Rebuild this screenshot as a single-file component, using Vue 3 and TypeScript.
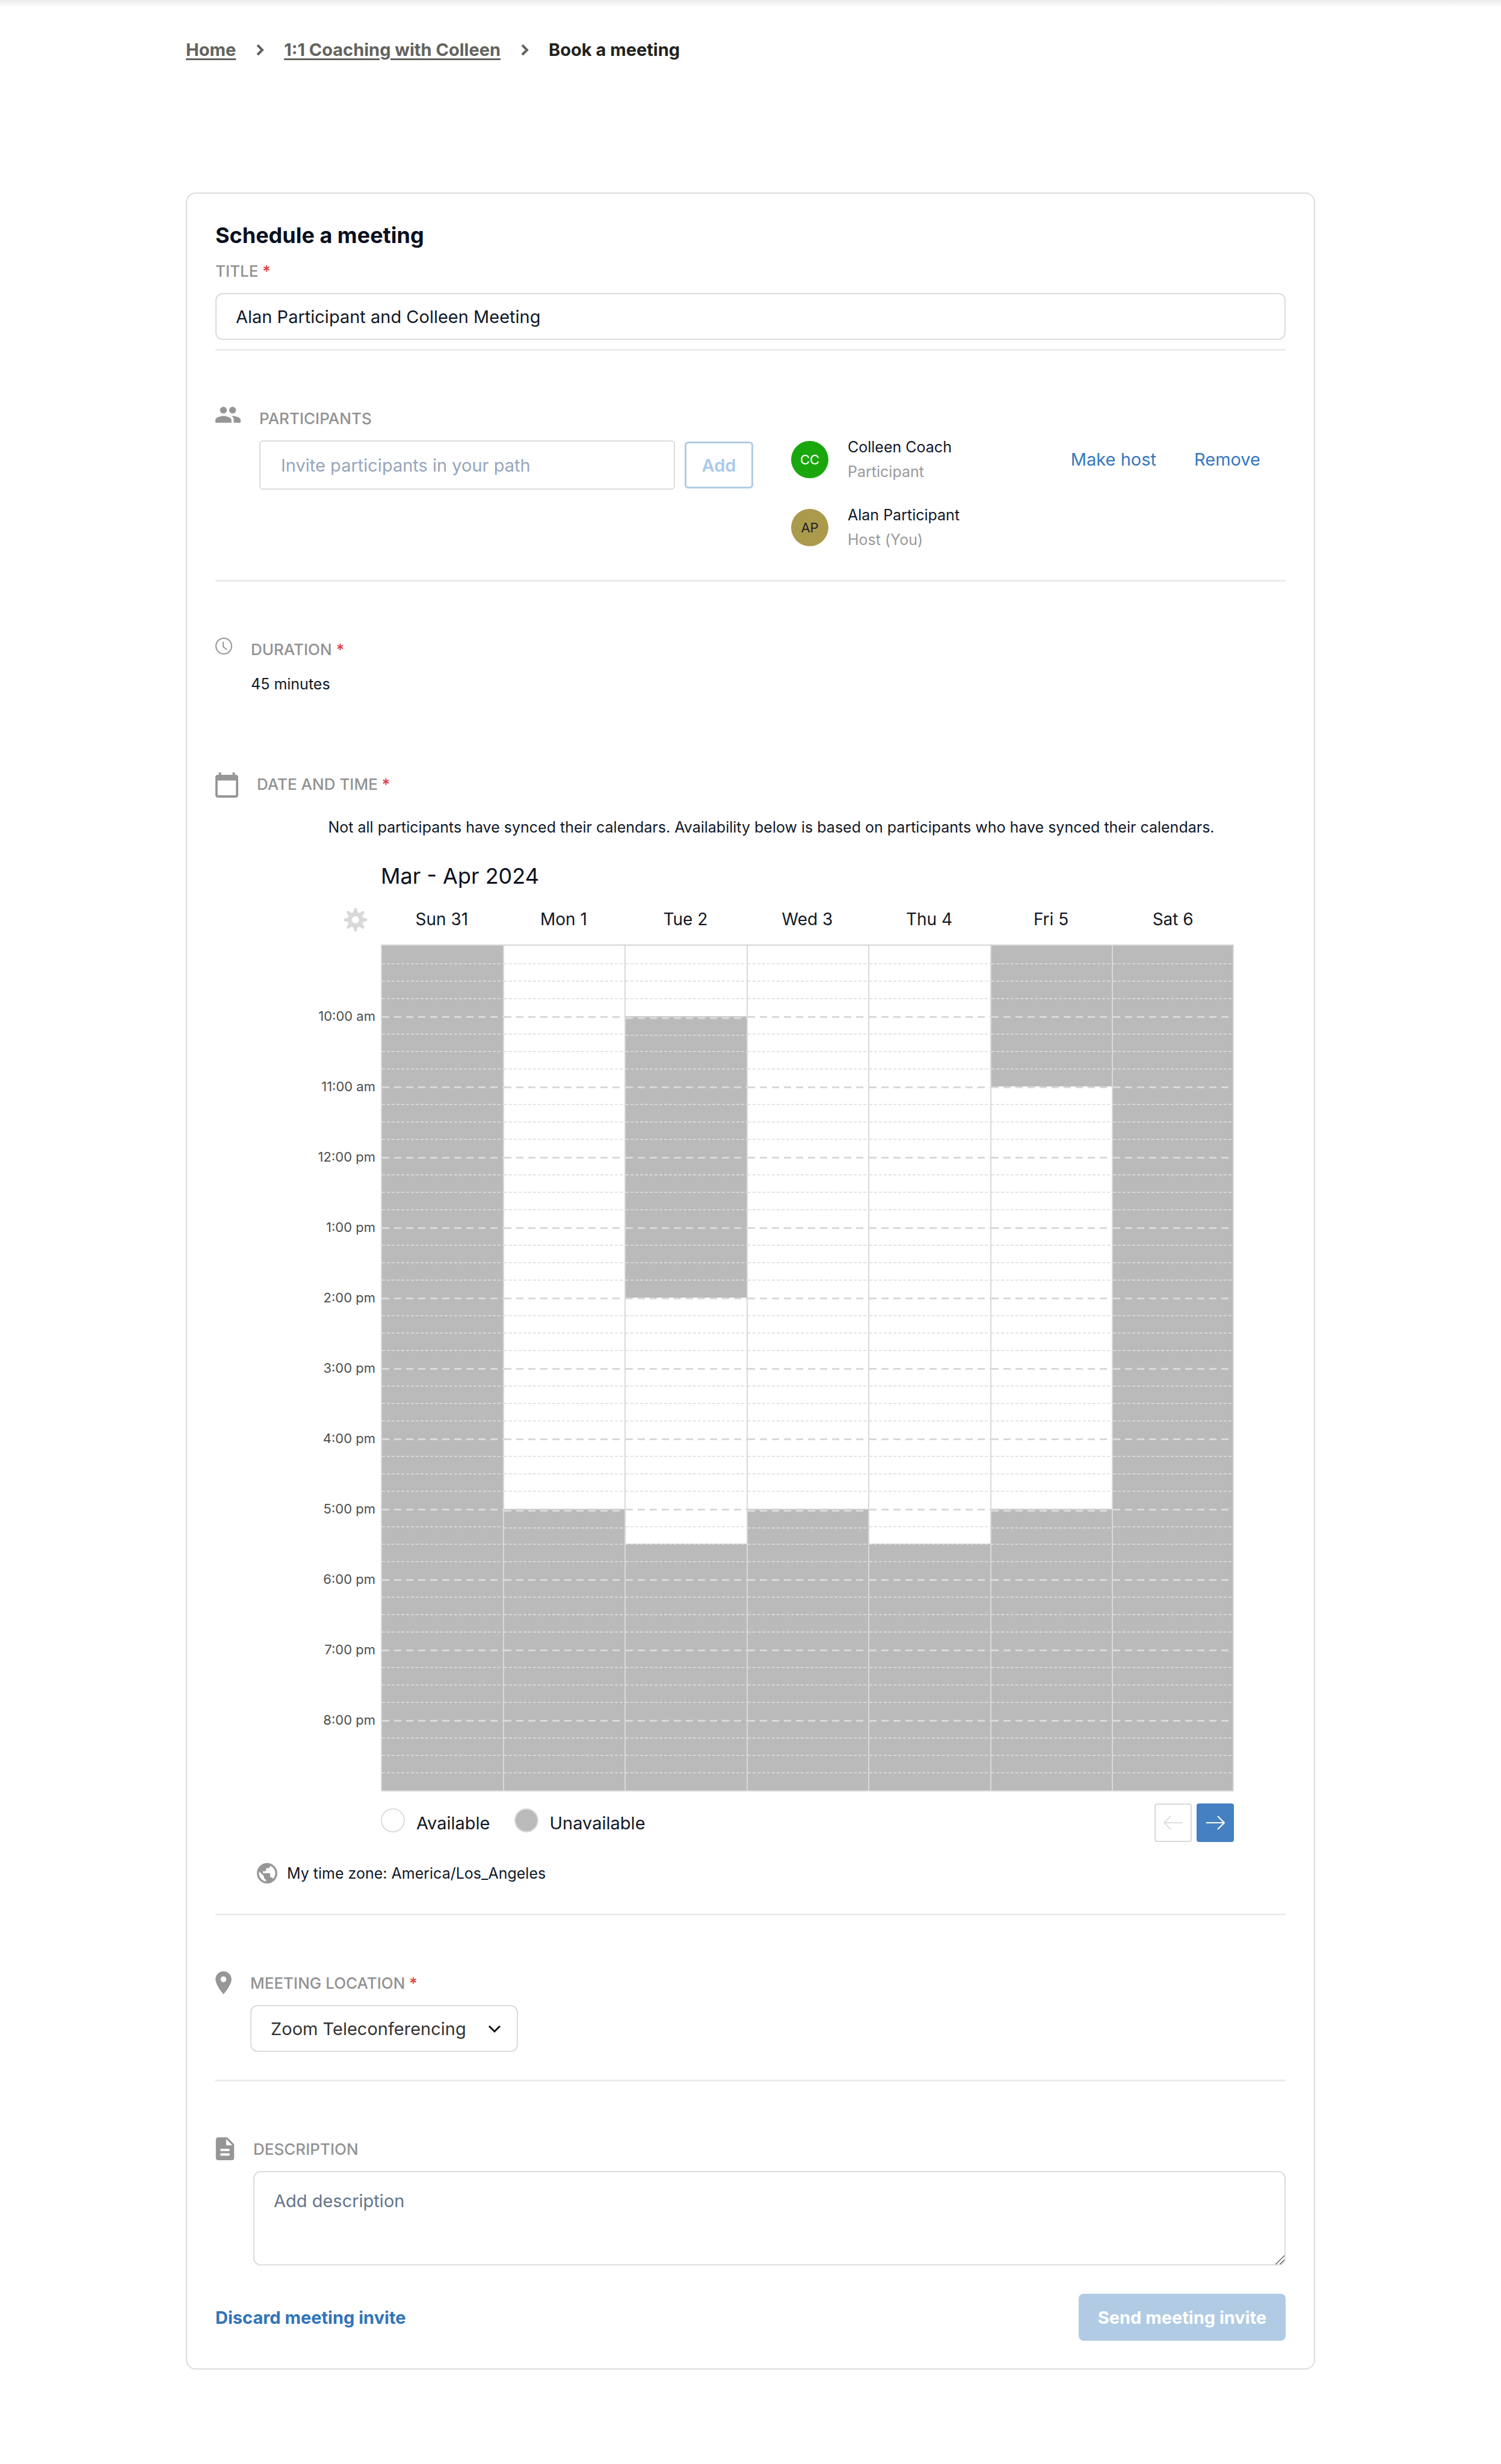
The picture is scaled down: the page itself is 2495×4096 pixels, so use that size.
<script setup lang="ts">
import { ref } from 'vue'

interface Attendee {
  initials: string
  name: string
  role: string
  tone: 'green' | 'olive'
  removable: boolean
}

interface Day {
  label: string
  // Unavailable spans as [start, end) half-hour slots counted from 9:00 am
  busy: [number, number][]
}

const title = ref('Alan Participant and Colleen Meeting')
const invitee = ref('')
const description = ref('')
const location = ref('Zoom Teleconferencing')

const attendees: Attendee[] = [
  { initials: 'CC', name: 'Colleen Coach', role: 'Participant', tone: 'green', removable: true },
  { initials: 'AP', name: 'Alan Participant', role: 'Host (You)', tone: 'olive', removable: false },
]

const days: Day[] = [
  { label: 'Sun 31', busy: [[0, 24]] },
  { label: 'Mon 1', busy: [[16, 24]] },
  { label: 'Tue 2', busy: [[2, 10], [17, 24]] },
  { label: 'Wed 3', busy: [[16, 24]] },
  { label: 'Thu 4', busy: [[17, 24]] },
  { label: 'Fri 5', busy: [[0, 4], [16, 24]] },
  { label: 'Sat 6', busy: [[0, 24]] },
]

const hours = [
  '10:00 am', '11:00 am', '12:00 pm', '1:00 pm', '2:00 pm', '3:00 pm',
  '4:00 pm', '5:00 pm', '6:00 pm', '7:00 pm', '8:00 pm',
]

const slots = Array.from({ length: 24 }, (_, i) => i)

const isBusy = (day: Day, slot: number) => day.busy.some(([from, to]) => slot >= from && slot < to)
const startsBusy = (day: Day, slot: number) => slot > 0 && day.busy.some(([from]) => from === slot)
</script>

<template>
  <div class="page">
    <div class="top-shadow"></div>
    <main class="content">
      <nav class="crumbs" aria-label="Breadcrumb">
        <a href="#home">Home</a>
        <svg class="crumb-sep" viewBox="0 0 14 20" aria-hidden="true"><path d="M3 2l8 8-8 8" /></svg>
        <a href="#coaching">1:1 Coaching with Colleen</a>
        <svg class="crumb-sep" viewBox="0 0 14 20" aria-hidden="true"><path d="M3 2l8 8-8 8" /></svg>
        <span class="crumb-current">Book a meeting</span>
      </nav>

      <form class="card" @submit.prevent>
        <div class="title-block">
          <h1>Schedule a meeting</h1>
          <label class="label" for="title">TITLE <span class="req">*</span></label>
          <input id="title" v-model="title" class="field title-field" type="text" />
        </div>

        <section class="section ruled">
          <svg class="icon people" viewBox="1 5 22 14" aria-hidden="true"><path d="M16 11c1.66 0 2.99-1.34 2.99-3S17.66 5 16 5c-1.66 0-3 1.34-3 3s1.34 3 3 3zm-8 0c1.66 0 2.99-1.34 2.99-3S9.66 5 8 5C6.34 5 5 6.34 5 8s1.34 3 3 3zm0 2c-2.33 0-7 1.17-7 3.5V19h14v-2.5c0-2.33-4.67-3.5-7-3.5zm8 0c-.29 0-.62.02-.97.05 1.16.84 1.97 1.97 1.97 3.45V19h6v-2.5c0-2.33-4.67-3.5-7-3.5z" /></svg>
          <div class="body split">
            <div class="invite">
              <label class="label" for="invitee">PARTICIPANTS</label>
              <div class="invite-row">
                <input id="invitee" v-model="invitee" class="field invite-field" type="text" placeholder="Invite participants in your path" />
                <button class="add" type="button" disabled>Add</button>
              </div>
            </div>
            <ul class="attendees">
              <li v-for="a in attendees" :key="a.initials" class="attendee">
                <span class="avatar" :class="a.tone">{{ a.initials }}</span>
                <div class="who">
                  <div class="name">{{ a.name }}</div>
                  <div class="role">{{ a.role }}</div>
                </div>
                <div v-if="a.removable" class="actions">
                  <button class="link" type="button">Make host</button>
                  <button class="link" type="button">Remove</button>
                </div>
              </li>
            </ul>
          </div>
        </section>

        <section class="section duration">
          <svg class="icon clock" viewBox="0 0 28 28" aria-hidden="true"><circle cx="14" cy="14" r="13" /><path d="M13 7v8l6 5" /></svg>
          <div class="body">
            <div class="label">DURATION <span class="req">*</span></div>
            <p class="value">45 minutes</p>
          </div>
        </section>

        <section class="section ruled">
          <svg class="icon date" viewBox="2 1 20 22" aria-hidden="true"><path d="M20 3h-1V1h-2v2H7V1H5v2H4c-1.1 0-2 .9-2 2v16c0 1.1.9 2 2 2h16c1.1 0 2-.9 2-2V5c0-1.1-.9-2-2-2zm0 18H4V8h16v13z" /></svg>
          <div class="body when">
            <div class="label">DATE AND TIME <span class="req">*</span></div>
            <p class="notice">Not all participants have synced their calendars. Availability below is based on participants who have synced their calendars.</p>

            <div class="calendar">
              <h2>Mar - Apr 2024</h2>
              <table>
                <thead>
                  <tr>
                    <td class="gear-cell">
                      <button class="gear" type="button" aria-label="Calendar settings">
                        <svg viewBox="-20 -20 40 40" aria-hidden="true">
                          <circle r="9.5" />
                          <path v-for="n in 8" :key="n" :transform="`rotate(${n * 45})`" d="M-7-10C-3-12-3-14-2.6-18Q0-21.5 2.6-18C3-14 3-12 7-10Z" />
                        </svg>
                      </button>
                    </td>
                    <th v-for="d in days" :key="d.label" scope="col">{{ d.label }}</th>
                  </tr>
                </thead>
                <tbody>
                  <tr v-for="s in slots" :key="s">
                    <td v-if="s === 0 || s === 23" class="blank"></td>
                    <th v-else-if="s % 2 === 1" scope="row" rowspan="2">{{ hours[(s - 1) / 2] }}</th>
                    <td
                      v-for="d in days"
                      :key="d.label"
                      class="slot"
                      :class="{ hour: s % 2 === 0, first: s === 0, busy: isBusy(d, s), edge: startsBusy(d, s) }"
                    ></td>
                  </tr>
                </tbody>
              </table>
              <div class="legend-row">
                <div class="legend">
                  <span class="dot"></span><span class="legend-text">Available</span>
                  <span class="dot filled"></span><span class="legend-text">Unavailable</span>
                </div>
                <div class="pager">
                  <button class="page-btn prev" type="button" aria-label="Previous week" disabled>
                    <svg viewBox="0 0 32 24" aria-hidden="true"><path d="M31 12H2M12 1L1 12l11 11" /></svg>
                  </button>
                  <button class="page-btn next" type="button" aria-label="Next week">
                    <svg viewBox="0 0 32 24" aria-hidden="true"><path d="M1 12h29M20 1l11 11-11 11" /></svg>
                  </button>
                </div>
              </div>
            </div>

            <div class="zone">
              <svg viewBox="2 2 20 20" aria-hidden="true"><path d="M12 2C6.48 2 2 6.48 2 12s4.48 10 10 10 10-4.48 10-10S17.52 2 12 2zm-1 17.93c-3.95-.49-7-3.85-7-7.93 0-.62.08-1.21.21-1.79L9 15v1c0 1.1.9 2 2 2v1.93zm6.9-2.54c-.26-.81-1-1.39-1.9-1.39h-1v-3c0-.55-.45-1-1-1H8v-2h2c.55 0 1-.45 1-1V7h2c1.1 0 2-.9 2-2v-.41c2.93 1.19 5 4.06 5 7.41 0 2.08-.8 3.97-2.1 5.39z" /></svg>
              <span>My time zone: America/Los_Angeles</span>
            </div>
          </div>
        </section>

        <section class="section ruled">
          <svg class="icon place" viewBox="5 2 14 20" aria-hidden="true"><path d="M12 2C8.13 2 5 5.13 5 9c0 5.25 7 13 7 13s7-7.75 7-13c0-3.87-3.13-7-7-7zm0 9.5c-1.38 0-2.5-1.12-2.5-2.5s1.12-2.5 2.5-2.5 2.5 1.12 2.5 2.5-1.12 2.5-2.5 2.5z" /></svg>
          <div class="body">
            <label class="label" for="location">MEETING LOCATION <span class="req">*</span></label>
            <div class="select-wrap">
              <select id="location" v-model="location" class="field">
                <option>Zoom Teleconferencing</option>
              </select>
              <svg class="caret" viewBox="0 0 22 14" aria-hidden="true"><path d="M2 2l9 9 9-9" /></svg>
            </div>
          </div>
        </section>

        <section class="section">
          <svg class="icon doc" viewBox="4 2 16 20" aria-hidden="true"><path d="M14 2H6c-1.1 0-1.99.9-1.99 2L4 20c0 1.1.89 2 1.99 2H18c1.1 0 2-.9 2-2V8l-6-6zm2 16H8v-2h8v2zm0-4H8v-2h8v2zm-3-5V3.5L18.5 9H13z" /></svg>
          <div class="body">
            <label class="label" for="description">DESCRIPTION</label>
            <textarea id="description" v-model="description" class="field" placeholder="Add description"></textarea>
          </div>
        </section>

        <footer class="footer">
          <button class="discard" type="button">Discard meeting invite</button>
          <button class="send" type="submit" disabled>Send meeting invite</button>
        </footer>
      </form>
    </main>
  </div>
</template>

<style>
body {
  margin: 0;
  background: #fff;
}
</style>

<style scoped>
.page,
.page * {
  box-sizing: border-box;
}

.page {
  font-family: Inter, 'Liberation Sans', sans-serif;
  font-size: 29px;
  line-height: 32px;
  color: #111827;
  padding-bottom: 48px;
}

.page button,
.page input,
.page select,
.page textarea {
  font-family: inherit;
}

button {
  border: 0;
  padding: 0;
  background: none;
}

.top-shadow {
  height: 12px;
  background: linear-gradient(#ececec, #fff);
}

.content {
  width: calc(100% - 48px);
  max-width: 1877px;
  margin: 0 auto;
}

.crumbs {
  display: flex;
  align-items: center;
  gap: 33px;
  padding-top: 53px;
  line-height: 36px;
  font-weight: 700;
}

.crumbs a {
  color: #63635e;
  text-decoration: underline;
  text-decoration-thickness: 3px;
  text-underline-offset: 4px;
}

.crumb-current {
  color: #22221c;
}

.crumb-sep {
  width: 14px;
  height: 20px;
  fill: none;
  stroke: #63635e;
  stroke-width: 4;
}

.card {
  margin-top: 219px;
  padding: 47px 47px 46px;
  border: 2px solid #dcdcdc;
  border-radius: 16px;
}

.title-block {
  padding-bottom: 15px;
  border-bottom: 3px solid #ebebeb;
}

h1 {
  margin: 0 0 22px;
  font-size: 36px;
  line-height: 44px;
  font-weight: 700;
  color: #0b1020;
}

.label {
  display: block;
  font-size: 26px;
  line-height: 32px;
  font-weight: 500;
  color: #929292;
}

.req {
  color: #e03a3a;
}

.field {
  display: block;
  width: 100%;
  height: 78px;
  margin: 20px 0 0;
  padding: 0 32px;
  border: 2px solid #dcdcdc;
  border-radius: 12px;
  background: #fff;
  font-size: 29px;
  color: #111827;
  outline: none;
}

.section {
  display: flex;
  align-items: flex-start;
  gap: 31px;
  padding-top: 93px;
}

.ruled {
  padding-bottom: 46px;
  border-bottom: 3px solid #ebebeb;
}

.icon {
  flex: none;
  fill: #969696;
}

.people {
  width: 42px;
  height: 27px;
}

.clock {
  width: 28px;
  height: 28px;
  fill: none;
  stroke: #969696;
  stroke-width: 2;
}

.date {
  width: 38px;
  height: 42px;
}

.place {
  width: 27px;
  height: 38px;
}

.doc {
  width: 32px;
  height: 38px;
}

.body {
  flex: 1;
  min-width: 0;
  padding-top: 4px;
}

.split {
  display: flex;
  gap: 63px;
}

.invite {
  flex: 0 1 821px;
}

.invite-row {
  display: flex;
  align-items: center;
  gap: 16px;
  margin-top: 20px;
}

.invite-field {
  flex: 1;
  min-width: 0;
  height: 82px;
  margin: 0;
  padding: 0 34px;
  border-radius: 6px;
}

.invite-field::placeholder {
  color: #97a5bd;
}

.add {
  width: 114px;
  height: 78px;
  border: 3px solid #b1cbe4;
  border-radius: 6px;
  font-size: 29px;
  font-weight: 600;
  color: #a9c9e9;
}

.attendees {
  flex: 1;
  margin: 0;
  padding: 43px 42px 0 0;
  list-style: none;
}

.attendee {
  display: flex;
  align-items: center;
}

.attendee + .attendee {
  margin-top: 31px;
}

.avatar {
  width: 62px;
  height: 62px;
  margin-right: 32px;
  border-radius: 50%;
  text-align: center;
  font-size: 22px;
  line-height: 62px;
}

.green {
  background: #1aa70e;
  color: #fff;
}

.olive {
  background: #ab9a4c;
  color: #222;
}

.who {
  font-size: 25px;
  line-height: 41px;
}

.role {
  color: #999;
}

.actions {
  display: flex;
  gap: 63px;
  margin-left: auto;
}

.link {
  font-size: 29px;
  line-height: 36px;
  color: #3578bd;
}

.duration {
  padding-bottom: 38px;
}

.value {
  margin: 25px 0 0;
  font-size: 25px;
}

.notice {
  margin: 39px 0 0;
  font-size: 25px;
  text-align: center;
}

.calendar {
  margin: 43px 86px 0 100px;
}

h2 {
  margin: 0 0 8px 106px;
  font-size: 36px;
  line-height: 44px;
  font-weight: 400;
  color: #0b1020;
}

table {
  width: 100%;
  table-layout: fixed;
  border-collapse: separate;
  border-spacing: 0;
}

th,
td {
  padding: 0;
  font-weight: 400;
}

thead th {
  height: 86px;
  font-size: 28px;
  border-bottom: 2px solid #d6d6d6;
}

.gear-cell {
  width: 106px;
  padding-right: 22px;
  text-align: right;
}

.gear {
  width: 40px;
  height: 40px;
  vertical-align: middle;
}

.gear svg {
  display: block;
  fill: #d9d9d9;
}

.gear circle {
  fill: none;
  stroke: #d9d9d9;
  stroke-width: 7;
}

tbody th {
  padding-right: 9px;
  font-size: 22px;
  text-align: right;
  color: #4d4d4d;
}

tbody tr {
  height: 58px;
}

tbody tr:nth-child(even) {
  height: 59px;
}

tbody tr:last-child {
  height: 61px;
}

.slot {
  --quarter: repeating-linear-gradient(to right, rgba(222, 222, 222, 0.8) 0 5px, transparent 5px 8px);
  --whole: repeating-linear-gradient(to right, #d9d9d9 0 12px, transparent 12px 20px);
  border-left: 2px solid #d9d9d9;
  background-image: var(--quarter), var(--quarter);
  background-size: 100% 2px;
  background-position: 0 0, 0 29px;
  background-repeat: no-repeat;
}

.slot:last-child {
  border-right: 2px solid #d9d9d9;
}

tr:last-child .slot {
  border-bottom: 2px solid #d6d6d6;
}

.slot.hour {
  background-image: var(--whole), var(--quarter);
  background-size: 100% 3px, 100% 2px;
}

.slot.first {
  background-image: none, var(--quarter);
}

.slot.busy {
  background-color: #bababa;
}

.slot.edge.hour {
  border-top: 2px solid #d0d0d0;
}

.legend-row {
  display: flex;
  justify-content: space-between;
  margin: 20px 0 0 106px;
}

.legend {
  display: flex;
  align-items: flex-start;
  padding-top: 8px;
}

.dot {
  width: 40px;
  height: 40px;
  border: 2px solid #dcdcdc;
  border-radius: 50%;
}

.filled {
  background: #bababa;
}

.legend-text {
  margin: 0 40px 0 19px;
  padding-top: 9px;
}

.pager {
  display: flex;
  gap: 8px;
}

.page-btn {
  display: flex;
  align-items: center;
  justify-content: center;
  width: 62px;
  height: 64px;
  border-radius: 4px;
}

.page-btn svg {
  width: 32px;
  height: 24px;
  fill: none;
  stroke: #dedede;
  stroke-width: 2;
}

.prev {
  border: 2px solid #d9d9d9;
}

.next {
  background: #4480c2;
}

.next svg {
  stroke: #fff;
}

.zone {
  display: flex;
  align-items: center;
  gap: 16px;
  margin: 35px 0 4px;
  font-size: 25px;
}

.zone svg {
  width: 34px;
  height: 34px;
  fill: #969696;
}

.select-wrap {
  position: relative;
  width: 445px;
}

select.field {
  appearance: none;
  color: #333;
}

.caret {
  position: absolute;
  right: 28px;
  top: 33px;
  width: 22px;
  height: 14px;
  fill: none;
  stroke: #111;
  stroke-width: 3;
  pointer-events: none;
}

textarea.field {
  height: 157px;
  padding: 30px 32px;
  line-height: 36px;
  resize: vertical;
}

textarea::placeholder {
  color: #64748b;
}

textarea::-webkit-resizer {
  background: linear-gradient(135deg, transparent 47%, #666 47% 54%, transparent 54% 72%, #666 72% 79%, transparent 79%);
}

.footer {
  display: flex;
  align-items: center;
  justify-content: space-between;
  margin-top: 47px;
}

.discard {
  font-size: 29px;
  font-weight: 700;
  color: #3174b8;
}

.send {
  width: 344px;
  height: 78px;
  border-radius: 8px;
  background: #b1cbe4;
  font-size: 29px;
  font-weight: 700;
  color: #fff;
}
</style>
